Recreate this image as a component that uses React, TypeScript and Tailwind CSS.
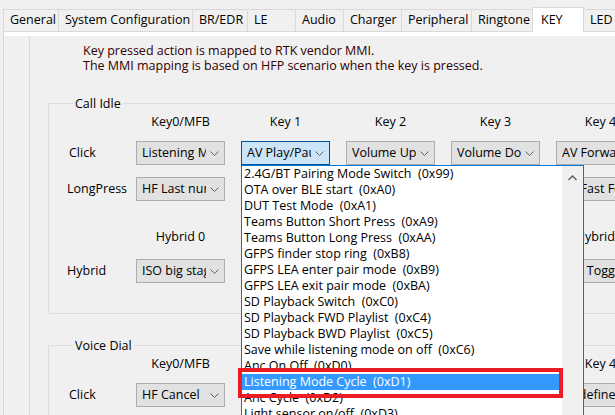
import React from "react";

const TABS = [
  { label: "General", cls: "w-[55px] border-l" },
  { label: "System Configuration", cls: "w-[134px] border-l" },
  { label: "BR/EDR", cls: "w-[55px] border-l" },
  { label: "LE", cls: "w-[48px] border-l" },
  { label: "Audio", cls: "w-[48px] border-l" },
  { label: "Charger", cls: "w-[58px] border-l" },
  { label: "Peripheral", cls: "w-[70px] border-l" },
  { label: "Ringtone", cls: "w-[61px] border-l" },
  { label: "KEY", cls: "w-[52px] border-x", active: true },
  { label: "LED", cls: "w-[60px] pl-[4px]" },
];

const ITEMS = [
  "2.4G/BT Pairing Mode Switch  (0x99)",
  "OTA over BLE start  (0xA0)",
  "DUT Test Mode  (0xA1)",
  "Teams Button Short Press  (0xA9)",
  "Teams Button Long Press  (0xAA)",
  "GFPS finder stop ring  (0xB8)",
  "GFPS LEA enter pair mode  (0xB9)",
  "GFPS LEA exit pair mode  (0xBA)",
  "SD Playback Switch  (0xC0)",
  "SD Playback FWD Playlist  (0xC4)",
  "SD Playback BWD Playlist  (0xC5)",
  "Save while listening mode on off  (0xC6)",
  "Anc On Off  (0xD0)",
  "Listening Mode Cycle  (0xD1)",
  "Anc Cycle  (0xD2)",
  "Light sensor on/off  (0xD3)",
];

const KEYS = ["Key0/MFB", "Key 1", "Key 2", "Key 3", "Key 4"];

function Chevron() {
  return (
    <svg width="9" height="5" viewBox="0 0 9 5" className="ml-[4px] shrink-0">
      <polyline points="0.5,0.5 4.5,4.5 8.5,0.5" fill="none" stroke="#606060" strokeWidth="1" />
    </svg>
  );
}

function Combo({ text, open }: { text: string; open?: boolean }) {
  return (
    <div
      className={`flex h-[24px] w-[89px] items-center border pl-[5px] ${
        open ? "border-[#005499] bg-[#cce4f7]" : "border-[#adadad] bg-[#e1e1e1]"
      }`}
    >
      <span className="w-[64px] overflow-hidden whitespace-nowrap">{text}</span>
      <Chevron />
    </div>
  );
}

function HeaderRow({ labels, className }: { labels: string[]; className: string }) {
  return (
    <div className={`grid grid-cols-[69px_repeat(5,105px)] leading-[15px] ${className}`}>
      <div />
      {labels.map((l) => (
        <div key={l} className="w-[89px] whitespace-nowrap text-center">
          {l}
        </div>
      ))}
    </div>
  );
}

function ComboRow({ label, values, className, open }: { label: string; values: string[]; className: string; open?: number }) {
  return (
    <div className={`grid grid-cols-[69px_repeat(5,105px)] items-center ${className}`}>
      <div className={label === "Click" ? "pl-[2px]" : ""}>{label}</div>
      {values.map((v, i) => (
        <Combo key={i} text={v} open={open === i} />
      ))}
    </div>
  );
}

export default function App() {
  return (
    <div className="relative h-[415px] w-[615px] overflow-hidden bg-[#f0f0f0] font-['Open_Sans',sans-serif] text-[12.5px] text-black">
      {/* tab bar */}
      <div className="flex h-[31px] items-end pl-[3px]">
        {TABS.map((t) => (
          <div
            key={t.label}
            className={`flex shrink-0 items-center whitespace-nowrap border-t border-[#d9d9d9] ${t.cls} ${
              t.active ? "relative z-10 -mb-px h-[25px] bg-white pl-[8px]" : "h-[22px] bg-[#f0f0f0] pl-[6px]"
            }`}
          >
            {t.label}
          </div>
        ))}
      </div>

      {/* tab page */}
      <div className="ml-[3px] border-l border-t border-[#d9d9d9]">
        <div className="h-[4px] bg-white" />
        <div className="flex">
          <div className="w-[25px] shrink-0" />
          <div className="h-[400px] grow border-l border-[#d9d9d9]">
            <div className="pl-[53px] pt-[7px] leading-[15px] text-[#330000]">
              <p>Key pressed action is mapped to RTK vendor MMI.</p>
              <p>The MMI mapping is based on HFP scenario when the key is pressed.</p>
            </div>

            <fieldset className="ml-[18px] mt-[23px] w-[600px] border border-[#dcdcdc] pb-[30px] pl-[18px]">
              <legend className="ml-[6px] px-[2px] leading-[15px]">Call Idle</legend>
              <HeaderRow labels={KEYS} className="mt-[3px]" />
              <ComboRow
                label="Click"
                className="mt-[12px]"
                open={1}
                values={["Listening Mode Cycle", "AV Play/Pause", "Volume Up", "Volume Down", "AV Forward"]}
              />
              <ComboRow
                label="LongPress"
                className="mt-[12px]"
                values={["HF Last number redial", "Voice Dial", "Volume Up", "Volume Down", "AV Fast Forward"]}
              />
              <HeaderRow labels={["Hybrid 0", "Hybrid 1", "Hybrid 2", "Hybrid 3", "Hybrid 4"]} className="mt-[28px]" />
              <ComboRow
                label="Hybrid"
                className="mt-[15px]"
                values={["ISO big stage", "Undefined", "Undefined", "Undefined", "Anc Toggle"]}
              />
            </fieldset>

            <fieldset className="ml-[18px] mt-[24px] w-[600px] border border-[#dcdcdc] pb-[30px] pl-[18px]">
              <legend className="ml-[6px] px-[2px] leading-[15px]">Voice Dial</legend>
              <HeaderRow labels={KEYS} className="mt-[3px]" />
              <ComboRow
                label="Click"
                className="mt-[12px]"
                values={["HF Cancel", "Undefined", "Undefined", "Undefined", "Undefined"]}
              />
            </fieldset>
          </div>
        </div>
      </div>

      {/* open combobox popup */}
      <div className="absolute left-[241px] top-[165px] z-20 flex h-[260px] w-[343px] border border-[#0078d7] bg-white">
        <div className="w-[320px]">
          {ITEMS.map((item) => (
            <div
              key={item}
              className={`h-[16px] whitespace-pre pl-[2px] leading-[16px] ${
                item.startsWith("Listening") ? "bg-[#3399ff] text-white" : ""
              }`}
            >
              {item}
            </div>
          ))}
        </div>
        <div className="flex w-[21px] justify-center bg-[#f0f0f0] pt-[9px]">
          <svg width="9" height="6" viewBox="0 0 9 6">
            <polyline points="0.5,5 4.5,1 8.5,5" fill="none" stroke="#606060" strokeWidth="1.5" />
          </svg>
        </div>
      </div>

      {/* annotation */}
      <div className="absolute left-[238px] top-[368px] z-30 h-[30px] w-[325px] border-4 border-[#ec1c24]" />
    </div>
  );
}
